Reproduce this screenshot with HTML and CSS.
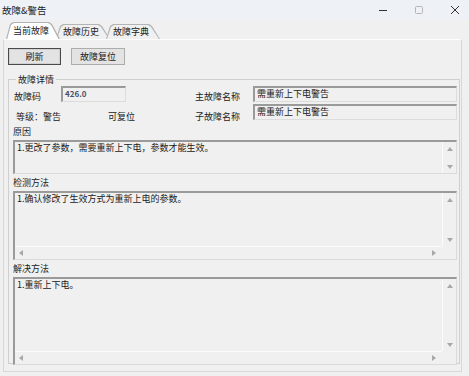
FILE: index.html
```html
<!DOCTYPE html>
<html lang="zh">
<head>
  <meta charset="UTF-8" />
  <title>故障&amp;警告</title>
  <link rel="stylesheet" href="styles.css">
</head>
<body>
  <div class="titlebar">
    <span class="title">故障&amp;警告</span>
    <div class="win-controls">
      <svg class="win-btn" width="10" height="10" viewBox="0 0 10 10"><path d="M1 5.5h8" stroke="#333" stroke-width="1"/></svg>
      <svg class="win-btn" width="10" height="10" viewBox="0 0 10 10"><rect x="1.5" y="1.5" width="7" height="7" rx="1" fill="none" stroke="#b5b5b5" stroke-width="1"/></svg>
      <svg class="win-btn" width="10" height="10" viewBox="0 0 10 10"><path d="M1 1l8 8M9 1l-8 8" stroke="#333" stroke-width="1"/></svg>
    </div>
  </div>

  <div class="tabs">
    <div class="tab active"><span>当前故障</span></div>
    <div class="tab"><span>故障历史</span></div>
    <div class="tab"><span>故障字典</span></div>
  </div>

  <div class="panel">
    <div class="toolbar">
      <button class="btn default">刷新</button>
      <button class="btn">故障复位</button>
    </div>

    <fieldset class="group">
      <legend>故障详情</legend>
      <div class="row">
        <span class="lbl code-lbl">故障码</span>
        <div class="field code-field">426.0</div>
        <span class="lbl name-lbl">主故障名称</span>
        <div class="field name-field">需重新上下电警告</div>
      </div>
      <div class="row">
        <span class="lbl level-lbl">等级：警告</span>
        <span class="lbl reset-lbl">可复位</span>
        <span class="lbl name-lbl">子故障名称</span>
        <div class="field name-field">需重新上下电警告</div>
      </div>

      <div class="sec-lbl first">原因</div>
      <div class="memo memo-cause">
        <div class="memo-text">1.更改了参数，需要重新上下电，参数才能生效。</div>
        <div class="vscroll"><i class="arr up"></i><i class="arr down"></i></div>
      </div>

      <div class="sec-lbl">检测方法</div>
      <div class="memo memo-check with-h">
        <div class="memo-text">1.确认修改了生效方式为重新上电的参数。</div>
        <div class="vscroll"><i class="arr up"></i><i class="arr down"></i></div>
        <div class="hscroll"><i class="arr left"></i><i class="arr right"></i></div>
        <div class="corner"></div>
      </div>

      <div class="sec-lbl">解决方法</div>
      <div class="memo memo-fix with-h">
        <div class="memo-text">1.重新上下电。</div>
        <div class="vscroll"><i class="arr up"></i><i class="arr down"></i></div>
        <div class="hscroll"><i class="arr left"></i><i class="arr right"></i></div>
        <div class="corner"></div>
      </div>
    </fieldset>
  </div>
</body>
</html>
```

FILE: styles.css
```css
* {
  margin: 0;
  padding: 0;
  box-sizing: border-box;
}

body {
  width: 469px;
  height: 376px;
  overflow: hidden;
  background-color: #f0f0f0;
  font-family: "Noto Sans CJK SC", "Noto Sans", sans-serif;
  font-size: 9px;
  color: #1a1a1a;
}

/* title bar */
.titlebar {
  height: 19px;
  background-color: #eef2f7;
  display: flex;
  align-items: center;
  justify-content: space-between;
}

.title {
  padding-left: 2px;
  font-size: 9.5px;
  color: #222;
}

.win-controls {
  display: flex;
  gap: 26px;
  padding-right: 9px;
}

/* tabs */
.tabs {
  height: 20px;
  display: flex;
  align-items: flex-end;
  padding-left: 6px;
}

.tab {
  position: relative;
  height: 15px;
  width: 54px;
  margin-right: -4px;
  display: flex;
  align-items: center;
  justify-content: center;
  padding-right: 4px;
  z-index: 1;
}

.tab::before,
.tab::after {
  content: "";
  position: absolute;
  clip-path: polygon(0 100%, 4px 2px, 7px 0, calc(100% - 11px) 0, calc(100% - 8px) 2px, 100% 100%);
}

.tab::before {
  inset: 0;
  background-color: #b4b4b4;
}

.tab::after {
  inset: 1px 1px 0 1px;
  background-color: #f0f0f0;
}

.tab span {
  position: relative;
  z-index: 2;
}

.tab.active {
  height: 17px;
  z-index: 3;
}

.tab.active::after {
  inset: 1px 1px -1px 1px;
  background-color: #ffffff;
}

/* panel */
.panel {
  height: 333px;
  margin: 0 7px 0 3px;
  border-top: 1px solid #fdfdfd;
  border-left: 1px solid #d8d8d8;
  border-right: 1px solid #d8d8d8;
  border-bottom: 1px solid #d8d8d8;
  padding: 8px 1px 0 4px;
}

.toolbar {
  display: flex;
  gap: 10px;
  margin-bottom: 10px;
}

.btn {
  font-family: inherit;
  font-size: 9px;
  color: #1a1a1a;
  height: 17px;
  background-color: #e3e3e3;
  border: 1px solid #adadad;
}

.btn.default {
  width: 53px;
  border: 1px solid #4a4a4a;
  box-shadow: inset 0 0 0 1px #d0d0d0;
}

.btn:not(.default) {
  width: 54px;
}

/* group box */
.group {
  border: 1px solid #cfcfcf;
  padding: 0 2px 2px 4px;
  height: 289px;
}

.group legend {
  margin-left: 3px;
  padding: 0 2px;
  line-height: 9px;
  color: #222;
}

.row {
  display: flex;
  align-items: flex-end;
  height: 16px;
  margin-top: 2px;
}

.lbl {
  line-height: 12px;
  color: #222;
}

.code-lbl {
  width: 48px;
  padding-left: 1px;
  margin-bottom: -1px;
}

.level-lbl {
  width: 95px;
  padding-left: 3px;
  margin-bottom: -3px;
}

.reset-lbl {
  width: 87px;
  margin-bottom: -3px;
}

.name-lbl {
  width: 58px;
  margin-bottom: -1px;
}

.row:nth-of-type(2) .name-lbl {
  margin-bottom: -3px;
}

.field {
  height: 16px;
  background-color: #f0f0f0;
  border-top: 2px solid #9a9a9a;
  border-left: 2px solid #9a9a9a;
  border-right: 1px solid #dcdcdc;
  border-bottom: 1px solid #dcdcdc;
  padding-left: 2px;
  line-height: 11px;
  white-space: nowrap;
}

.code-field {
  width: 65px;
  margin-right: 69px;
  font-size: 8px;
  font-weight: 600;
  color: #47506a;
}

.name-field {
  flex: 1;
}

/* memo boxes */
.sec-lbl {
  line-height: 12px;
  margin-top: 3px;
  margin-bottom: 2px;
  color: #222;
}

.sec-lbl.first {
  margin-top: 6px;
}

.memo {
  display: grid;
  grid-template-columns: 1fr 14px;
  grid-template-rows: 1fr;
  background-color: #f0f0f0;
  border-top: 2px solid #9a9a9a;
  border-left: 2px solid #9a9a9a;
  border-right: 1px solid #dadada;
  border-bottom: 1px solid #dadada;
}

.memo.with-h {
  grid-template-rows: 1fr 13px;
}

.memo-cause { height: 34px; }
.memo-check { height: 69px; }
.memo-fix { height: 88px; }

.memo-text {
  padding: 0 2px;
  line-height: 11px;
  white-space: nowrap;
}

.vscroll {
  border-left: 1px solid #fbfbfb;
  display: flex;
  flex-direction: column;
  justify-content: space-between;
  align-items: center;
  padding: 5px 0 4px;
}

.hscroll {
  border-top: 1px solid #fbfbfb;
  display: flex;
  justify-content: space-between;
  align-items: center;
  padding: 0 6px 0 4px;
}

.corner {
  background-color: #f0f0f0;
}

.arr {
  display: block;
  width: 0;
  height: 0;
}

.arr.up {
  border-left: 3px solid transparent;
  border-right: 3px solid transparent;
  border-bottom: 4px solid #a8a8a8;
}

.arr.down {
  border-left: 3px solid transparent;
  border-right: 3px solid transparent;
  border-top: 4px solid #a8a8a8;
}

.arr.left {
  border-top: 3px solid transparent;
  border-bottom: 3px solid transparent;
  border-right: 4px solid #a8a8a8;
}

.arr.right {
  border-top: 3px solid transparent;
  border-bottom: 3px solid transparent;
  border-left: 4px solid #a8a8a8;
}
```
